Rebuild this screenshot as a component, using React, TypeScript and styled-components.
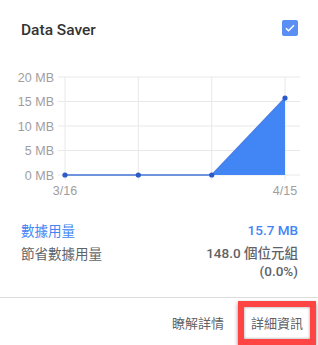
import React from 'react'
import styled, { createGlobalStyle } from 'styled-components'

const GlobalStyle = createGlobalStyle`
  html, body {
    margin: 0;
    padding: 0;
    background: #fff;
  }
  body {
    font-family: Roboto, "Noto Sans CJK TC", sans-serif;
    color: #333;
  }
`

const Card = styled.div`
  width: 318px;
  height: 345px;
  display: flex;
  flex-direction: column;
  overflow: hidden;
`

const Header = styled.div`
  display: flex;
  justify-content: space-between;
  align-items: flex-start;
  padding: 20px 20px 0 21px;
  height: 40px;
  box-sizing: border-box;
`

const Title = styled.h1`
  margin: 0;
  font-size: 15.5px;
  line-height: 20px;
  font-weight: 500;
  color: #333;
`

const Check = styled.div`
  width: 16px;
  height: 16px;
  border-radius: 2px;
  background: #5a8ef2;
  display: flex;
  align-items: center;
  justify-content: center;
`

const ChartSvg = styled.svg`
  display: block;
  margin-top: 20px;
`

const Stats = styled.div`
  display: flex;
  flex-direction: column;
  gap: 5px;
  padding: 21px 20px 0 21px;
  font-size: 13.5px;
  line-height: 18px;
`

const Row = styled.div`
  display: flex;
  justify-content: space-between;
  align-items: flex-start;
`

const Label = styled.span<{ $accent?: boolean }>`
  color: ${p => (p.$accent ? '#4285f4' : '#5f6368')};
  font-family: "Noto Sans CJK TC", sans-serif;
`

const Value = styled.span<{ $accent?: boolean }>`
  text-align: right;
  color: ${p => (p.$accent ? '#4285f4' : '#5f6368')};
  font-weight: 500;
  font-family: Roboto, "Noto Sans CJK TC", sans-serif;
`

const Divider = styled.div`
  height: 1px;
  background: #dcdcdc;
  margin-top: 17px;
`

const Footer = styled.div`
  display: flex;
  justify-content: flex-end;
  align-items: center;
  gap: 14px;
  padding: 3px 2px 0 0;
`

const Button = styled.button<{ $highlight?: boolean }>`
  background: #fff;
  font-family: "Noto Sans CJK TC", sans-serif;
  font-size: 13px;
  line-height: 18px;
  color: #5f6368;
  cursor: pointer;
  padding: ${p => (p.$highlight ? '7px 7px' : '7px 0')};
  border: ${p => (p.$highlight ? '6px solid #ff4444' : 'none')};
  box-shadow: ${p =>
    p.$highlight ? '0 2px 4px rgba(0,0,0,0.45), inset 0 0 3px rgba(0,0,0,0.4)' : 'none'};
`

const W = 318
const H = 140
const top = 17
const bottom = 115
const xs = [65, 138.3, 211.7, 285]
const yOf = (mb: number) => bottom - (mb / 20) * (bottom - top)
const axisFont = "'Liberation Sans', Arial, sans-serif"

function Chart() {
  const ticks = [0, 5, 10, 15, 20]
  const last = yOf(15.7)
  return (
    <ChartSvg width={W} height={H} viewBox={`0 0 ${W} ${H}`}>
      {ticks.map(t => (
        <g key={t}>
          <line x1={58} x2={300} y1={yOf(t)} y2={yOf(t)} stroke="#e8e8e8" strokeWidth={1} />
          <text x={54} y={yOf(t) + 4.5} textAnchor="end" fontSize={12.5} fontFamily={axisFont} fill="#9e9e9e">
            {t} MB
          </text>
        </g>
      ))}
      {xs.map(x => (
        <line key={x} x1={x} x2={x} y1={top} y2={bottom + 5} stroke="#e8e8e8" strokeWidth={1} />
      ))}
      <polygon points={`${xs[2]},${bottom} ${xs[3]},${last} ${xs[3]},${bottom}`} fill="#4285f4" />
      <polyline
        points={`${xs[0]},${bottom} ${xs[1]},${bottom} ${xs[2]},${bottom}`}
        fill="none"
        stroke="#6f93dc"
        strokeWidth={2}
      />
      <line x1={xs[2]} y1={bottom} x2={xs[3]} y2={last} stroke="#4a7fe6" strokeWidth={1.5} />
      {[bottom, bottom, bottom, last].map((y, i) => (
        <circle key={i} cx={xs[i]} cy={y} r={2.6} fill="#2a5bc9" />
      ))}
      <text x={65} y={134.5} textAnchor="middle" fontSize={12.5} fontFamily={axisFont} fill="#9e9e9e">
        3/16
      </text>
      <text x={285} y={134.5} textAnchor="middle" fontSize={12.5} fontFamily={axisFont} fill="#9e9e9e">
        4/15
      </text>
    </ChartSvg>
  )
}

export default function App() {
  return (
    <>
      <GlobalStyle />
      <Card>
        <Header>
          <Title>Data Saver</Title>
          <Check>
            <svg width="12" height="12" viewBox="0 0 24 24">
              <path d="M4 12.5l5 5L20 6.5" fill="none" stroke="#fff" strokeWidth="3" />
            </svg>
          </Check>
        </Header>
        <Chart />
        <Stats>
          <Row>
            <Label $accent>數據用量</Label>
            <Value $accent>15.7 MB</Value>
          </Row>
          <Row>
            <Label>節省數據用量</Label>
            <Value>
              148.0 個位元組
              <br />
              (0.0%)
            </Value>
          </Row>
        </Stats>
        <Divider />
        <Footer>
          <Button>瞭解詳情</Button>
          <Button $highlight>詳細資訊</Button>
        </Footer>
      </Card>
    </>
  )
}
